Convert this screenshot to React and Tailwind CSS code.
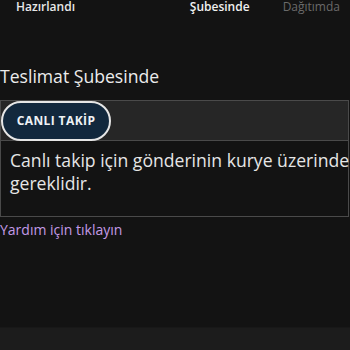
export default function App() {
  return (
    <div className="w-[350px] h-[350px] overflow-hidden bg-[#131313] flex flex-col text-white" style={{ fontFamily: "'Open Sans', 'Noto Sans', sans-serif" }}>
      <div className="h-[327px] flex flex-col">
        <div className="flex items-center h-[14px] text-[12px] font-semibold leading-[14px]">
          <span className="ml-[16px] text-[#e8e8e8]">Hazırlandı</span>
          <span className="ml-auto text-[#f0f0f0]">Şubesinde</span>
          <span className="ml-[33px] mr-[10px] font-normal text-[#6a6a6a]">Dağıtımda</span>
        </div>
        <h2 className="mt-[50px] text-[17.6px] leading-[24px] text-[#ececec]">Teslimat Şubesinde</h2>
        <div className="mt-[12px] mr-[1px] border border-[#4a4a4a]">
          <div className="h-[40px] bg-[#262626] border-b border-[#4a4a4a] flex items-center">
            <button className="h-[40px] w-[110px] rounded-full border-2 border-[#e6e6e6] bg-[#12283d] text-[12px] font-bold tracking-[0.4px] text-[#eef2f6]">
              CANLI TAKİP
            </button>
          </div>
          <p className="px-[9px] pt-[8px] pb-[21px] text-[17.6px] leading-[23px] text-[#e6e6e6] whitespace-nowrap">
            Canlı takip için gönderinin kurye üzerinde olması<br />gereklidir.
          </p>
        </div>
        <a className="mt-[4px] text-[14px] leading-[18px] text-[#c39ae6]">Yardım için tıklayın</a>
      </div>
      <div className="flex-1 bg-[#1c1c1c] border-t border-[#181818]" />
    </div>
  );
}
